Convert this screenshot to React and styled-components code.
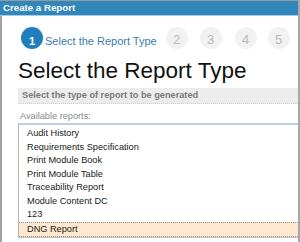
import React from "react";
import styled, { createGlobalStyle } from "styled-components";

const Global = createGlobalStyle`
  html, body { margin: 0; padding: 0; background: #fff; }
  body { font-family: "Liberation Sans", Arial, sans-serif; overflow: hidden; }
`;

const Window = styled.div`
  width: 300px;
  height: 242px;
  box-sizing: border-box;
  border-top: 1px solid #9a9a9a;
  border-right: 2px solid #a8a8a8;
  display: flex;
  flex-direction: column;
  overflow: hidden;
`;

const TitleBar = styled.div`
  height: 14px;
  background: #2f87bb;
  border-bottom: 1px solid #a9cbe3;
  color: #fff;
  font-weight: bold;
  font-size: 9.7px;
  line-height: 14px;
  padding-left: 3px;
  flex: none;
`;

const Body = styled.div`
  flex: 1;
  border-left: 2px solid #a3a3a3;
  padding-left: 16px;
  display: flex;
  flex-direction: column;
`;

const Steps = styled.div`
  display: flex;
  align-items: center;
  height: 22px;
  margin-top: 11px;
`;

const Circle = styled.div`
  width: 22px;
  height: 22px;
  border-radius: 50%;
  background: ${(p) => (p.$active ? "#1f7fba" : "#f2f2f2")};
  color: ${(p) => (p.$active ? "#fff" : "#b9b9b9")};
  font-size: ${(p) => (p.$active ? "11px" : "13px")};
  font-weight: ${(p) => (p.$active ? "bold" : "normal")};
  display: flex;
  align-items: center;
  justify-content: center;
  padding-top: ${(p) => (p.$active ? "5px" : "2px")};
  box-sizing: border-box;
  flex: none;
  margin-left: ${(p) => p.$ml || 0}px;
  margin-right: ${(p) => p.$mr || 0}px;
`;

const StepLabel = styled.div`
  color: #3a7db3;
  font-size: 11px;
  padding-top: 6px;
  margin-left: 2px;
  margin-right: 9px;
`;

const Heading = styled.h1`
  margin: 9px 0 0 0;
  font-weight: normal;
  font-size: 22.5px;
  line-height: 26px;
  color: #111;
`;

const Instruction = styled.div`
  margin-top: 4px;
  height: 15px;
  background: #ececec;
  border-bottom: 1px dotted #cfcfcf;
  color: #7a7a7a;
  font-weight: bold;
  font-size: 9.2px;
  line-height: 15px;
  padding-left: 4px;
`;

const Label = styled.div`
  margin-top: 6px;
  margin-left: 2px;
  color: #8a8a8a;
  font-size: 9.2px;
  line-height: 12px;
`;

const ListBox = styled.div`
  margin-top: 1px;
  border-top: 2px solid #bccfe0;
  border-left: 1px solid #b5b5b5;
  border-bottom: 1px solid #c4c4c4;
  padding-top: 2px;
  display: flex;
  flex-direction: column;
`;

const Item = styled.div`
  height: 13.5px;
  line-height: 13.5px;
  font-size: 9.2px;
  color: #1a1a1a;
  padding-left: 8px;
  box-sizing: border-box;
  ${(p) =>
    p.$selected &&
    `
    background: #ffe8cf;
    border-top: 1px dotted #8a8a8a;
    border-bottom: 1px dotted #8a8a8a;
    height: 15px;
    line-height: 13px;
  `}
`;

const reports = [
  "Audit History",
  "Requirements Specification",
  "Print Module Book",
  "Print Module Table",
  "Traceability Report",
  "Module Content DC",
  "123",
  "DNG Report",
];

export default function App() {
  return (
    <>
      <Global />
      <Window>
        <TitleBar>Create a Report</TitleBar>
        <Body>
          <Steps>
            <Circle $active $ml={3}>1</Circle>
            <StepLabel>Select the Report Type</StepLabel>
            <Circle $mr={12}>2</Circle>
            <Circle $mr={13}>3</Circle>
            <Circle $mr={11}>4</Circle>
            <Circle>5</Circle>
          </Steps>
          <Heading>Select the Report Type</Heading>
          <Instruction>Select the type of report to be generated</Instruction>
          <Label>Available reports:</Label>
          <ListBox>
            {reports.map((r, i) => (
              <Item key={r} $selected={i === reports.length - 1}>
                {r}
              </Item>
            ))}
          </ListBox>
        </Body>
      </Window>
    </>
  );
}
